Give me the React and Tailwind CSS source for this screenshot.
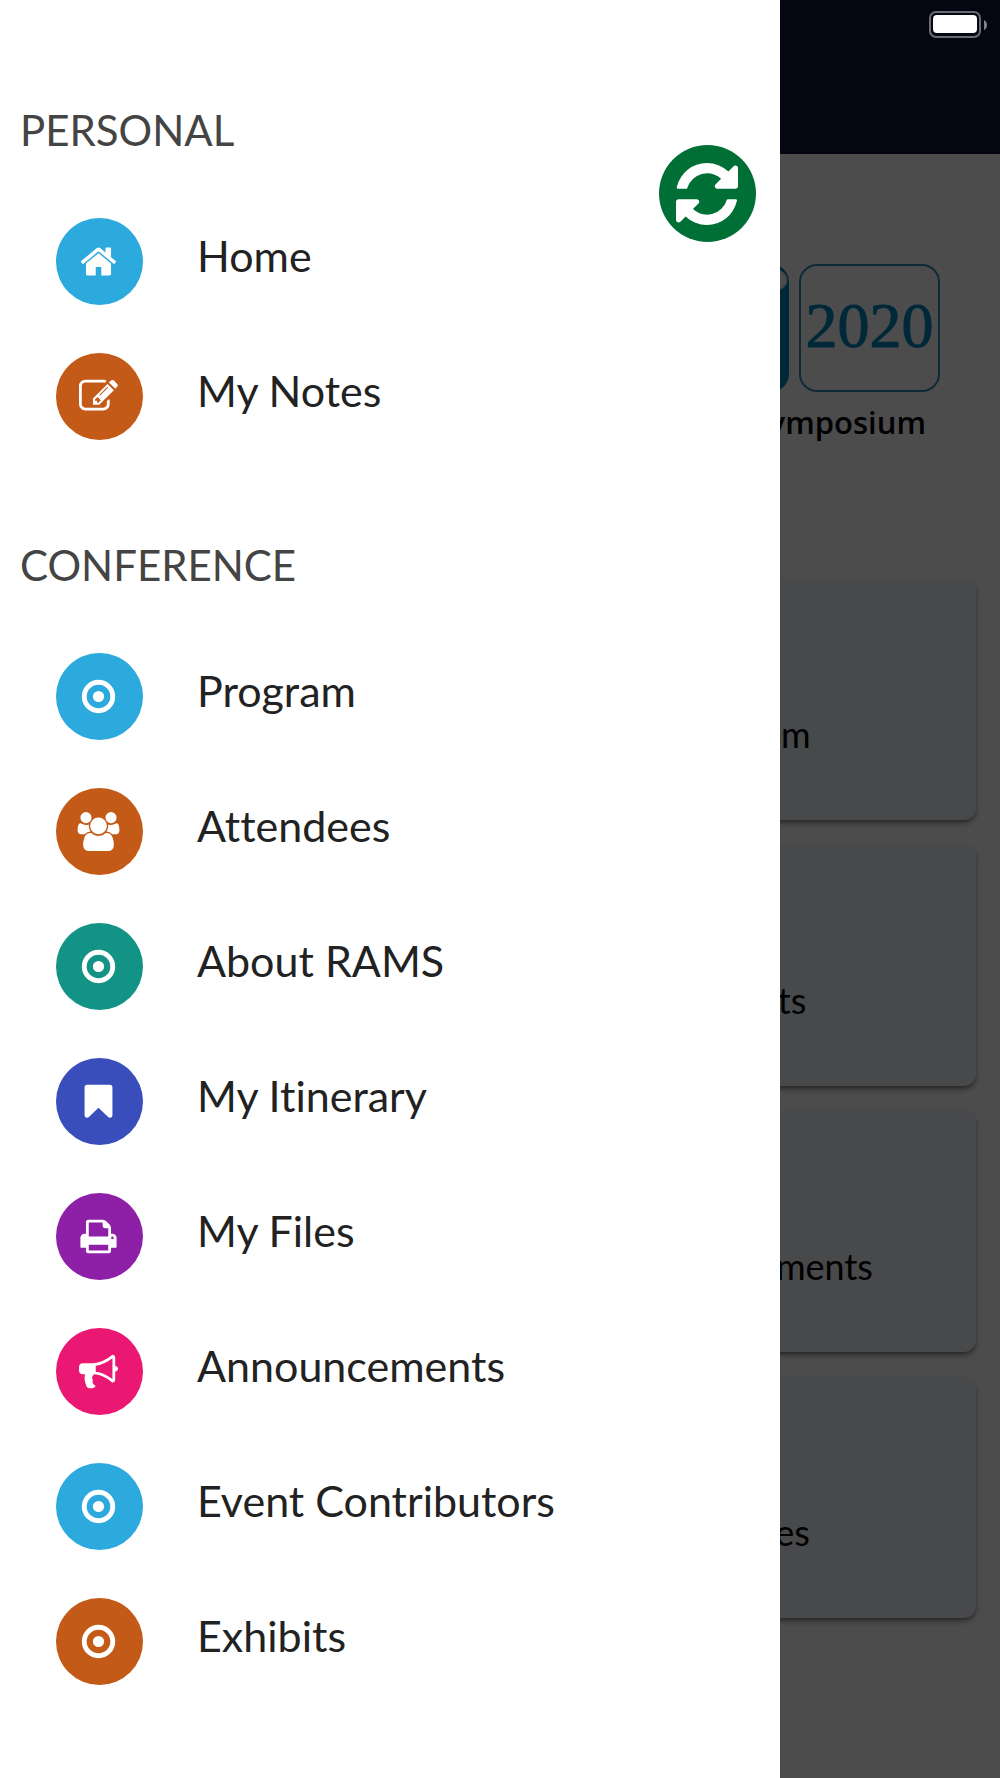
import React from 'react';

const ICON_PATHS = {
    home: 'M1472 992v480q0 26-19 45t-45 19h-384v-384h-256v384h-384q-26 0-45-19t-19-45v-480q0-1 .5-3t.5-3l575-474 575 474q1 2 1 6zm223-69l-62 74q-8 9-21 11h-3q-13 0-21-7l-692-577-692 577q-12 8-24 7-13-2-21-11l-62-74q-8-10-7-23.5t11-21.5l719-599q32-26 76-26t76 26l244 204v-195q0-14 9-23t23-9h192q14 0 23 9t9 23v408l219 182q10 8 11 21.5t-7 23.5z',
    edit: 'M888 1184l116-116-152-152-116 116v56h96v96h56zm440-720q-16-16-33 1l-350 350q-17 17-1 33t33-1l350-350q17-17 1-33zm80 594v190q0 119-84.5 203.5t-203.5 84.5h-832q-119 0-203.5-84.5t-84.5-203.5v-832q0-119 84.5-203.5t203.5-84.5h832q63 0 117 25 15 7 18 23 3 17-9 29l-49 49q-14 14-32 8-23-6-45-6h-832q-66 0-113 47t-47 113v832q0 66 47 113t113 47h832q66 0 113-47t47-113v-126q0-13 9-22l64-64q15-15 35-7t20 29zm-96-738l288 288-672 672h-288v-288zm444 132l-92 92-288-288 92-92q28-28 68-28t68 28l152 152q28 28 28 68t-28 68z',
    bookmark: 'M1420 128q23 0 44 9 33 13 52.5 41t19.5 62v1289q0 34-19.5 62t-52.5 41q-19 8-44 8-48 0-83-32l-441-424-441 424q-36 33-83 33-23 0-44-9-33-13-52.5-41t-19.5-62v-1289q0-34 19.5-62t52.5-41q21-9 44-9h1048z',
    print: 'M448 1536h896v-256h-896v256zm0-640h896v-384h-160q-40 0-68-28t-28-68v-160h-640v640zm1152 64q0-26-19-45t-45-19-45 19-19 45 19 45 45 19 45-19 19-45zm128 0v416q0 13-9.5 22.5t-22.5 9.5h-224v160q0 40-28 68t-68 28h-960q-40 0-68-28t-28-68v-160h-224q-13 0-22.5-9.5t-9.5-22.5v-416q0-79 56.5-135.5t135.5-56.5h64v-544q0-40 28-68t68-28h672q40 0 88 20t76 48l152 152q28 28 48 76t20 88v256h64q79 0 135.5 56.5t56.5 135.5z',
    bullhorn: 'M1664 640q53 0 90.5 37.5t37.5 90.5-37.5 90.5-90.5 37.5v384q0 52-38 90t-90 38q-417-347-812-380-58 19-91 66t-31 100.5 40 92.5q-20 33-23 65.5t6 58 33.5 55 48 50 61.5 50.5q-29 58-111.5 83t-168.5 11.5-132-55.5q-7-23-29.5-87.5t-32-94.5-23-89-15-101 3.5-98.5 22-110.5h-122q-66 0-113-47t-47-113v-192q0-66 47-113t113-47h480q435 0 896-384 52 0 90 38t38 90v384zm-128 604v-954q-394 302-768 343v270q377 42 768 341z',
};

const USERS_PATH = 'M657 896q-162 5-265 128h-134q-82 0-138-40.5t-56-118.5q0-353 124-353 6 0 43.5 21t97.5 42.5 119 21.5q67 0 133-23-5 37-5 66 0 139 81 256zm1071 637q0 120-73 189.5t-194 69.5h-874q-121 0-194-69.5t-73-189.5q0-53 3.5-103.5t14-109 26.5-108.5 43-97.5 62-81 85.5-53.5 111.5-20q10 0 43 21.5t73 48 107 48 135 21.5 135-21.5 107-48 73-48 43-21.5q61 0 111.5 20t85.5 53.5 62 81 43 97.5 26.5 108.5 14 109 3.5 103.5zm-1024-1277q0 106-75 181t-181 75-181-75-75-181 75-181 181-75 181 75 75 181zm704 384q0 159-112.5 271.5t-271.5 112.5-271.5-112.5-112.5-271.5 112.5-271.5 271.5-112.5 271.5 112.5 112.5 271.5zm576 225q0 78-56 118.5t-138 40.5h-134q-103-123-265-128 81-117 81-256 0-29-5-66 66 23 133 23 59 0 119-21.5t97.5-42.5 43.5-21q124 0 124 353zm-128-609q0 106-75 181t-181 75-181-75-75-181 75-181 181-75 181 75 75 181z';

const REFRESH_PATH = 'M1511 928q0 5-1 7-64 268-268 434.5t-478 166.5q-146 0-282.5-55t-243.5-157l-129 129q-19 19-45 19t-45-19-19-45v-448q0-26 19-45t45-19h448q26 0 45 19t19 45-19 45l-137 137q71 66 161 102t187 36q134 0 250-65t186-179q11-17 53-117 8-23 30-23h192q13 0 22.5 9.5t9.5 22.5zm25-800v448q0 26-19 45t-45 19h-448q-26 0-45-19t-19-45 19-45l138-138q-148-137-349-137-134 0-250 65t-186 179q-11 17-53 117-8 23-30 23h-199q-13 0-22.5-9.5t-9.5-22.5v-7q65-268 270-434.5t480-166.5q146 0 284 55.5t245 156.5l130-129q19-19 45-19t45 19 19 45z';

const SECTIONS = [
    {
        title: 'PERSONAL',
        items: [
            { label: 'Home', icon: 'home', color: 'bg-[#2ca9dd]' },
            { label: 'My Notes', icon: 'edit', color: 'bg-[#c35a17]' },
        ],
    },
    {
        title: 'CONFERENCE',
        items: [
            { label: 'Program', icon: 'dot', color: 'bg-[#2ca9dd]' },
            { label: 'Attendees', icon: 'users', color: 'bg-[#c35a17]' },
            { label: 'About RAMS', icon: 'dot', color: 'bg-[#139385]' },
            { label: 'My Itinerary', icon: 'bookmark', color: 'bg-[#394dbb]' },
            { label: 'My Files', icon: 'print', color: 'bg-[#8e20a8]' },
            { label: 'Announcements', icon: 'bullhorn', color: 'bg-[#ea1773]' },
            { label: 'Event Contributors', icon: 'dot', color: 'bg-[#2ca9dd]' },
            { label: 'Exhibits', icon: 'dot', color: 'bg-[#c35a17]' },
        ],
    },
];

const TILES = ['Program', 'Exhibits', 'Announcements', 'My Files'];

function MenuIcon({ name }) {
    if (name === 'dot') {
        return (
            <svg className="size-[39px]" viewBox="0 0 1792 1792" fill="currentColor" aria-hidden="true">
                <circle cx="896" cy="896" r="656" fill="none" stroke="currentColor" strokeWidth="224" />
                <circle cx="896" cy="896" r="256" />
            </svg>
        );
    }

    if (name === 'users') {
        return (
            <svg className="w-[45px] h-[39px]" viewBox="0 0 2048 1792" fill="currentColor" aria-hidden="true">
                <path d={USERS_PATH} />
            </svg>
        );
    }

    return (
        <svg className="size-[39px]" viewBox="0 0 1792 1792" fill="currentColor" aria-hidden="true">
            <path d={ICON_PATHS[name]} />
        </svg>
    );
}

function MenuSection({ section }) {
    return (
        <section>
            <h2 className="pl-5 text-[42px] leading-12 text-[#444444]">{section.title}</h2>
            <ul className="mt-16 flex flex-col gap-12">
                {section.items.map((item) => (
                    <li key={item.label}>
                        <a href="#" className="flex items-center pl-14 gap-[54px] text-[#222222]">
                            <span
                                className={`flex items-center justify-center size-[87px] pr-0.5 shrink-0 rounded-full text-white ${item.color}`}
                            >
                                <MenuIcon name={item.icon} />
                            </span>
                            <span className="pb-3 text-[43px] leading-12">{item.label}</span>
                        </a>
                    </li>
                ))}
            </ul>
        </section>
    );
}

function Battery() {
    return (
        <svg className="w-[60px] h-7" viewBox="0 0 60 28" aria-hidden="true">
            <rect x="2" y="1" width="50" height="25" rx="6" fill="none" stroke="#6a6a72" strokeWidth="2" />
            <rect x="5" y="4" width="44" height="18" rx="4" fill="#ffffff" />
            <path d="M56 9q3 1.500 3 5t-3 5z" fill="#83838a" />
        </svg>
    );
}

export default function App() {
    return (
        <div className="grid grid-cols-1 min-h-screen overflow-hidden font-['Lato',sans-serif] [font-variant-ligatures:none]">
            {/* Page under the drawer */}
            <main className="col-start-1 row-start-1 bg-white">
                <header className="h-[154px] bg-[#11173c]" />

                <div className="mt-[110px] mr-[60px] flex flex-col items-end">
                    <div className="flex gap-2.5">
                        <svg className="w-[141px] h-32" viewBox="0 0 141 128" aria-hidden="true">
                            <rect width="141" height="128" rx="18" fill="#0388c0" />
                            <circle cx="129" cy="16" r="10" fill="#ffffff" stroke="#bbbbbb" strokeWidth="1" />
                        </svg>
                        <div className="flex items-center justify-center w-[141px] h-32 pb-1 border-2 border-[#2a8fb8] rounded-[18px] font-['Liberation_Serif',serif] text-[64px] leading-16 text-[#0388c0] [-webkit-text-stroke:1px_#0388c0]">
                            2020
                        </div>
                    </div>
                    <p className="mt-2 mr-3.5 font-['Open_Sans',sans-serif] text-[31px] leading-11 font-semibold text-black">
                        Symposium
                    </p>
                </div>

                <div className="mt-[134px] px-6 grid grid-cols-2 gap-6">
                    {TILES.map((tile) => (
                        <a
                            key={tile}
                            href="#"
                            className="col-start-2 flex justify-center h-[242px] pt-[134px] rounded-xl bg-[#f0f3f8] shadow-md shadow-black/40 text-[36px] leading-11 text-black"
                        >
                            {tile}
                        </a>
                    ))}
                </div>
            </main>

            <div className="col-start-1 row-start-1 z-10 bg-black/70" />

            <div className="col-start-1 row-start-1 z-20 self-start justify-self-end pt-[11px] pr-3">
                <Battery />
            </div>

            {/* Drawer */}
            <aside className="col-start-1 row-start-1 z-30 relative w-[78%] bg-white">
                <button
                    type="button"
                    aria-label="Refresh"
                    className="absolute top-[145px] right-6 flex items-center justify-center size-[97px] pr-0.5 rounded-full bg-[#006f35] text-white"
                >
                    <svg className="size-[62px]" viewBox="0 0 1536 1536" fill="currentColor" aria-hidden="true">
                        <path d={REFRESH_PATH} />
                    </svg>
                </button>

                <nav className="flex flex-col gap-[101px] pt-[106px] pb-20">
                    {SECTIONS.map((section) => (
                        <MenuSection key={section.title} section={section} />
                    ))}
                </nav>
            </aside>
        </div>
    );
}
